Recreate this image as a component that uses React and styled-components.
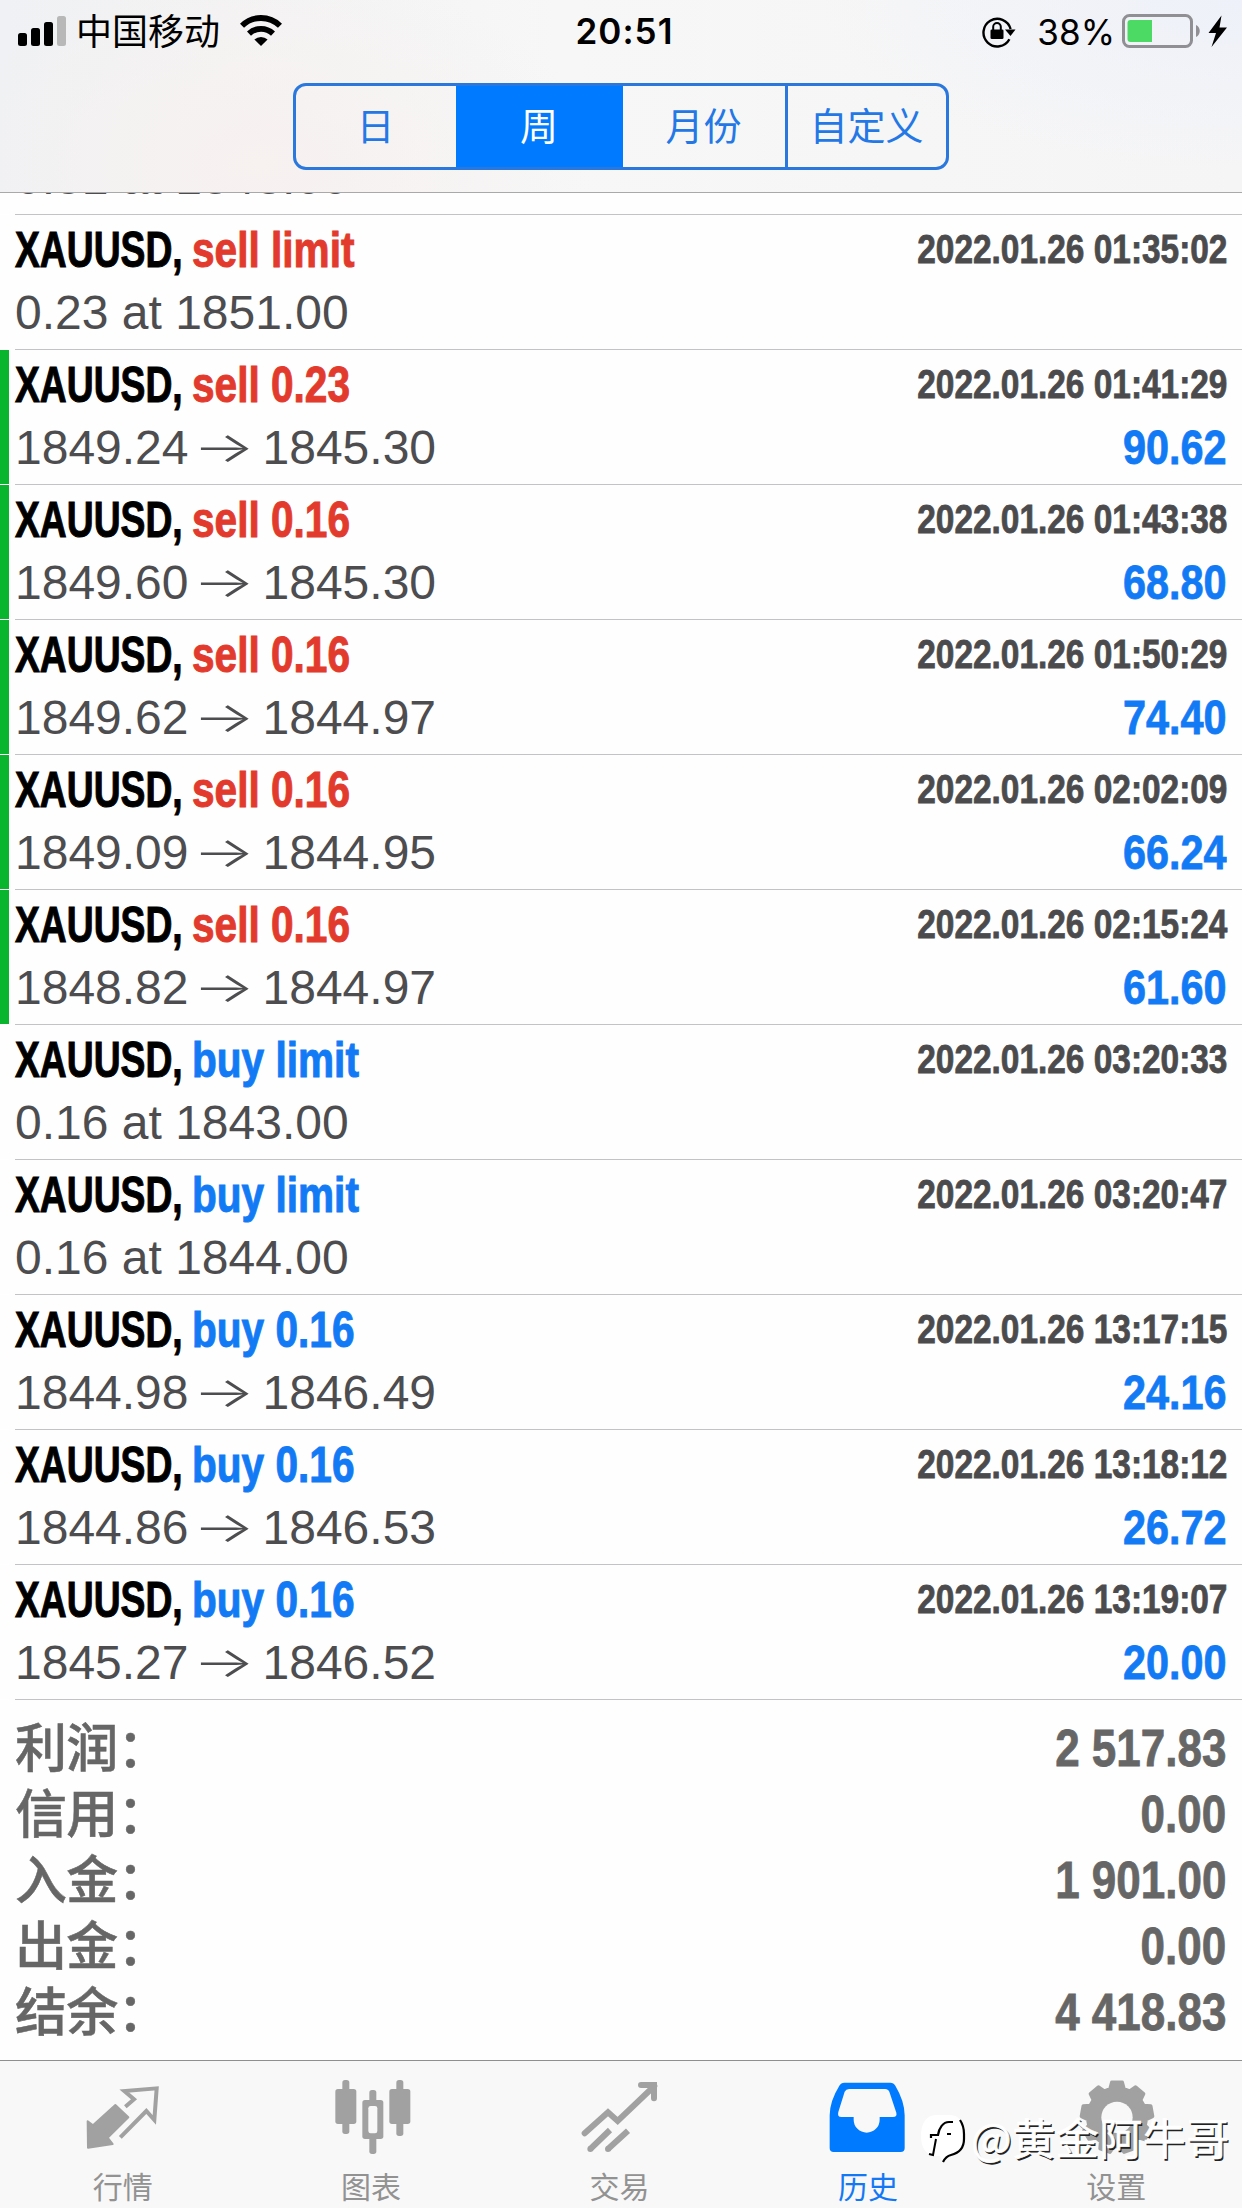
import React from 'react';
import styled, { createGlobalStyle } from 'styled-components';

const GlobalStyle = createGlobalStyle`
  * {
    box-sizing: border-box;
  }
  body {
    margin: 0;
    background: #fff;
    font-family: 'Liberation Sans', 'Noto Sans CJK SC', sans-serif;
  }
`;

const Screen = styled.div`
  display: flex;
  flex-direction: column;
  width: 1242px;
  height: 2208px;
  overflow: hidden;
  background: #fefefe;
`;

const Header = styled.header`
  flex: none;
  height: 193px;
  border-bottom: 1px solid #a9a9a9;
  background:
    radial-gradient(ellipse 420px 170px at 100% 0, #eef1f9 0%, rgba(238, 241, 249, 0) 100%),
    radial-gradient(ellipse 330px 200px at 21% 85%, #f7f1f0 0%, rgba(247, 241, 240, 0) 100%),
    linear-gradient(90deg, #eff1f4 0, #f3f3f3 18%, #f7f7f7 45%, #f5f5f6 100%);
`;

const StatusBar = styled.div`
  display: grid;
  grid-template-columns: 1fr auto 1fr;
  align-items: center;
  height: 60px;
  padding: 0 14px 0 18px;
`;

const StatusSide = styled.div`
  display: flex;
  align-items: center;
  justify-content: ${({ $end }) => ($end ? 'flex-end' : 'flex-start')};
`;

const Carrier = styled.span`
  margin: 0 20px 3px 9px;
  font: 36px/57px 'Noto Sans CJK SC', sans-serif;
`;

const Clock = styled.span`
  padding: 1px 0 1px 3px;
  font: 600 35px/60px Inter, sans-serif;
  letter-spacing: 1px;
`;

const Percent = styled.span`
  margin: 1px 7px 0 20px;
  font: 400 35px/60px Inter, sans-serif;
`;

const Segments = styled.nav`
  display: grid;
  grid-template-columns: 160px 167px 162px 1fr;
  width: 656px;
  height: 87px;
  margin: 23px 0 0 293px;
  border: 3px solid #2a77de;
  border-radius: 13px;
  overflow: hidden;
`;

const Segment = styled.button`
  border: 0;
  border-left: ${({ $divided }) => ($divided ? '3px solid #2a77de' : '0')};
  padding: 0 1px 6px 0;
  background: ${({ $active }) => ($active ? '#007aff' : 'transparent')};
  color: ${({ $active }) => ($active ? '#fff' : '#2478e6')};
  font: 38px/75px 'Noto Sans CJK SC', sans-serif;
`;

const List = styled.main`
  flex: none;
  display: flex;
  flex-direction: column;
  justify-content: flex-end;
  height: 1507px;
  overflow: hidden;
`;

const Row = styled.article`
  flex: none;
  display: flex;
  height: 135px;
`;

const Marker = styled.div`
  width: 9px;
  margin-right: 6px;
  background: ${({ $hit }) => ($hit ? '#08b52c' : 'transparent')};
  border-bottom: 1px solid #fff;
`;

const RowBody = styled.div`
  flex: 1;
  padding-right: 15px;
  border-bottom: 1px solid #c3c3c5;
`;

const Line = styled.div`
  display: flex;
  justify-content: space-between;
  height: ${({ $height }) => $height}px;
`;

const Title = styled.div`
  display: flex;
  font-size: 50px;
  font-weight: 700;
  line-height: 70px;
  white-space: nowrap;
  -webkit-text-stroke: 1px;
`;

const Symbol = styled.span`
  width: 177px;
  transform: scaleX(0.745);
  transform-origin: 0 0;
`;

const Side = styled.span`
  color: ${({ $buy }) => ($buy ? '#127af5' : '#e23a2c')};
  transform: scaleX(0.812);
  transform-origin: 0 0;
`;

const Time = styled.time`
  color: #4b4b4d;
  font-size: 40px;
  font-weight: 700;
  line-height: 68px;
  white-space: nowrap;
  -webkit-text-stroke: 0.8px;
  transform: scaleX(0.835);
  transform-origin: 100% 0;
`;

const Detail = styled.div`
  display: flex;
  color: #4d4d50;
  font-size: 48px;
  line-height: 60px;
  white-space: pre;
`;

const Arrow = styled.span`
  width: 74px;
  text-align: center;
  font-family: Inter, sans-serif;
  font-weight: 300;
  transform: translate(-2px, -1px) scale(1.36, 0.88);
`;

const Profit = styled.div`
  color: #127af5;
  font-size: 49px;
  font-weight: 700;
  line-height: 58px;
  -webkit-text-stroke: 0.8px;
  transform: scaleX(0.845);
  transform-origin: 100% 0;
`;

const Summary = styled.dl`
  flex: 1;
  margin: 0;
  padding: 15px 16px 0 15px;
`;

const SummaryRow = styled.div`
  display: flex;
  justify-content: space-between;
  height: 66px;
  color: #666;
`;

const Label = styled.dt`
  font: 500 52px/60px 'Noto Sans CJK SC', sans-serif;
  letter-spacing: -0.8px;
  -webkit-text-stroke: 0.5px;
`;

const Amount = styled.dd`
  margin: 0;
  font-size: 52px;
  font-weight: 700;
  line-height: 66px;
  -webkit-text-stroke: 0.8px;
  transform: scaleX(0.846);
  transform-origin: 100% 0;
`;

const TabBar = styled.nav`
  position: relative;
  flex: none;
  display: grid;
  grid-template-columns: repeat(5, 1fr);
  height: 148px;
  border-top: 1px solid #8f8f8f;
  background: #f8f8f8;
`;

const Tab = styled.a`
  display: flex;
  flex-direction: column;
  align-items: center;
  padding-top: 11px;
  color: ${({ $active }) => ($active ? '#1478f5' : '#929292')};
  font: 30px/44px 'Noto Sans CJK SC', sans-serif;

  svg {
    flex: none;
    margin-bottom: 11px;
    color: ${({ $active }) => ($active ? '#007aff' : '#a1a1a1')};
  }
`;

const TabLabel = styled.span`
  padding-right: 3px;
`;

// signature stamped over the right end of the tab bar
const Signature = styled.div`
  position: absolute;
  top: 53px;
  left: 920px;
  display: flex;
  align-items: center;
  gap: 1px;
  color: #fff;
  font: 43px/60px 'Noto Sans CJK SC', sans-serif;
  letter-spacing: 0.5px;
  text-shadow: 1.5px 1.5px 0 #222;
  -webkit-text-stroke: 0.6px #fff;
  white-space: nowrap;
`;

const SignatureName = styled.span`
  margin-top: -9px;
`;

const orders = [
  { side: 'sell limit', time: '2022.01.26 01:35:02', detail: '0.23 at 1851.00' },
  { side: 'sell 0.23', time: '2022.01.26 01:41:29', from: '1849.24', to: '1845.30', profit: '90.62', hit: true },
  { side: 'sell 0.16', time: '2022.01.26 01:43:38', from: '1849.60', to: '1845.30', profit: '68.80', hit: true },
  { side: 'sell 0.16', time: '2022.01.26 01:50:29', from: '1849.62', to: '1844.97', profit: '74.40', hit: true },
  { side: 'sell 0.16', time: '2022.01.26 02:02:09', from: '1849.09', to: '1844.95', profit: '66.24', hit: true },
  { side: 'sell 0.16', time: '2022.01.26 02:15:24', from: '1848.82', to: '1844.97', profit: '61.60', hit: true },
  { side: 'buy limit', time: '2022.01.26 03:20:33', detail: '0.16 at 1843.00' },
  { side: 'buy limit', time: '2022.01.26 03:20:47', detail: '0.16 at 1844.00' },
  { side: 'buy 0.16', time: '2022.01.26 13:17:15', from: '1844.98', to: '1846.49', profit: '24.16' },
  { side: 'buy 0.16', time: '2022.01.26 13:18:12', from: '1844.86', to: '1846.53', profit: '26.72' },
  { side: 'buy 0.16', time: '2022.01.26 13:19:07', from: '1845.27', to: '1846.52', profit: '20.00' },
];

const totals = [
  ['利润：', '2 517.83'],
  ['信用：', '0.00'],
  ['入金：', '1 901.00'],
  ['出金：', '0.00'],
  ['结余：', '4 418.83'],
];

function SignalIcon() {
  return (
    <svg width="49" height="32" viewBox="0 0 49 32">
      <rect x="0" y="18" width="9" height="13" rx="2.5" />
      <rect x="13" y="13" width="9" height="18" rx="2.5" />
      <rect x="26" y="7" width="9" height="24" rx="2.5" />
      <rect x="39" y="1" width="9" height="30" rx="2.5" fill="#b8b8b8" />
    </svg>
  );
}

function WifiIcon() {
  return (
    <svg width="42" height="32" viewBox="0 0 42 32">
      <g fill="none" stroke="#000" strokeWidth="5.8">
        <path d="M2 10.8a27 27 0 0 1 38 0" />
        <path d="M9 18.6a17.5 17.5 0 0 1 24 0" />
      </g>
      <path d="M14.4 24.6a9.8 9.8 0 0 1 13.2 0L21 31z" />
    </svg>
  );
}

function RotationLockIcon() {
  return (
    <svg width="36" height="34" viewBox="0 0 36 34">
      <path d="M28.4 25.2A13.8 13.8 0 1 1 29.6 15" fill="none" stroke="#000" strokeWidth="2.4" />
      <path d="M24 15.5h10.5L29.5 22z" />
      <rect x="9.5" y="15.5" width="13" height="9.5" rx="1.3" />
      <path d="M12.2 16v-3.2a3.8 3.8 0 0 1 7.6 0V16" fill="none" stroke="#000" strokeWidth="2" />
    </svg>
  );
}

function BatteryIcon() {
  return (
    <svg width="106" height="36" viewBox="0 0 106 36">
      <rect x="1.5" y="2.5" width="68" height="31" rx="6" fill="none" stroke="#8f8f94" strokeWidth="3" />
      <path d="M8.5 7H30v22H8.5A3 3 0 0 1 5.5 26V10a3 3 0 0 1 3-3z" fill="#4cd964" />
      <path d="M74 12c5 2 5 10 0 12z" fill="#8f8f94" />
      <path d="M99.5 2.5L86.5 20h7.5l-4.5 14L105 14.5h-7.5z" />
    </svg>
  );
}

function QuotesIcon() {
  return (
    <svg width="80" height="80" viewBox="0 0 240 240">
      <path
        d="M11 148L27 160L94 99L133 136L71 197L86 216L12 227Z"
        fill="currentColor"
        stroke="currentColor"
        strokeWidth="6"
        strokeLinejoin="round"
      />
      <path
        d="M124 104L150 82L121 57L218 49L211 144L187 117L109 196"
        fill="none"
        stroke="currentColor"
        strokeWidth="12"
      />
    </svg>
  );
}

function ChartIcon() {
  return (
    <svg width="80" height="80" viewBox="0 0 240 240" overflow="visible" fill="currentColor">
      <rect x="28" y="24" width="21" height="162" rx="8" />
      <rect x="7" y="51" width="63" height="105" rx="8" />
      <rect x="190" y="24" width="21" height="168" rx="8" />
      <rect x="169" y="51" width="63" height="105" rx="8" />
      <rect x="109" y="54" width="21" height="192" rx="8" />
      <rect x="88" y="84" width="63" height="117" rx="8" />
      <rect x="106" y="102" width="27" height="82" rx="7" fill="#f8f8f8" />
    </svg>
  );
}

function TradeIcon() {
  return (
    <svg width="80" height="80" viewBox="0 0 240 240" fill="none" stroke="currentColor" strokeWidth="18">
      <path d="M11 184L81 121L110 147L220 42" strokeLinecap="round" />
      <path d="M180 39H219V79" strokeLinecap="round" />
      <path d="M28 231L87 174M81 231L141 176" />
      <path d="M28 231h.1M81 231h.1" strokeLinecap="round" />
    </svg>
  );
}

function HistoryIcon() {
  return (
    <svg width="80" height="80" viewBox="0 0 240 240" fill="currentColor">
      <path
        fillRule="evenodd"
        d="M46 32H184Q194 32 199 41Q227 88 227 130V228Q227 240 215 240H14Q2 240 2 228V130Q2 88 31 41Q36 32 46 32Z
           M60 51Q51 51 47 59L28 120Q24 135 37 135H74V143A39 39 0 0 0 152 143V135H192Q205 135 202 122L182 62Q179 51 168 51Z"
      />
    </svg>
  );
}

const gearPoints = Array.from({ length: 9 }, (_, i) =>
  [
    [-14, 88],
    [-8.5, 107],
    [8.5, 107],
    [14, 88],
  ]
    .map(([offset, radius]) => {
      const angle = ((i * 40 + offset - 90) * Math.PI) / 180;
      return `${(117 + radius * Math.cos(angle)).toFixed(1)} ${(136 + radius * Math.sin(angle)).toFixed(1)}`;
    })
    .join('L'),
).join('L');

function SettingsIcon() {
  return (
    <svg width="80" height="80" viewBox="0 0 240 240" overflow="visible">
      <path
        d={`M${gearPoints}Z`}
        fill="currentColor"
        stroke="currentColor"
        strokeWidth="10"
        strokeLinejoin="round"
      />
      <circle cx="117" cy="136" r="47" fill="#f8f8f8" />
    </svg>
  );
}

function SignatureLogo() {
  return (
    <svg width="50" height="52" viewBox="0 0 50 52">
      <path
        d="M17 1h12c10 0 14 6 14 16v8c0 9-5 14-13 15l-7 8-3-6C7 43 1 35 1 22 1 8 7 1 17 1z"
        fill="#fff"
      />
      <path
        d="M40 6q4 6 4 14v5c0 9-5 14-13 16-4 1-6 3-8 7"
        fill="none"
        stroke="#000"
        strokeWidth="2.2"
      />
      <path d="M11 24v-3h7c1-7 5-13 11-13h4" fill="none" stroke="#000" strokeWidth="2.2" />
      <path d="M16 25l-3 16-4-1M27 20h4" fill="none" stroke="#000" strokeWidth="2" />
    </svg>
  );
}

const tabs = [
  { label: '行情', icon: QuotesIcon },
  { label: '图表', icon: ChartIcon },
  { label: '交易', icon: TradeIcon },
  { label: '历史', icon: HistoryIcon, active: true },
  { label: '设置', icon: SettingsIcon },
];

function Order({ order }) {
  return (
    <Row>
      <Marker $hit={order.hit} />
      <RowBody>
        <Line $height={68}>
          <Title>
            <Symbol>XAUUSD,</Symbol>
            <Side $buy={order.side.startsWith('buy')}>{order.side}</Side>
          </Title>
          <Time>{order.time}</Time>
        </Line>
        <Line $height={58}>
          {order.detail ? (
            <Detail>{order.detail}</Detail>
          ) : (
            <Detail>
              {order.from}
              <Arrow>→</Arrow>
              {order.to}
            </Detail>
          )}
          {order.profit && <Profit>{order.profit}</Profit>}
        </Line>
      </RowBody>
    </Row>
  );
}

function App() {
  return (
    <Screen>
      <GlobalStyle />
      <Header>
        <StatusBar>
          <StatusSide>
            <SignalIcon />
            <Carrier>中国移动</Carrier>
            <WifiIcon />
          </StatusSide>
          <Clock>20:51</Clock>
          <StatusSide $end>
            <RotationLockIcon />
            <Percent>38%</Percent>
            <BatteryIcon />
          </StatusSide>
        </StatusBar>
        <Segments>
          <Segment>日</Segment>
          <Segment $active>周</Segment>
          <Segment>月份</Segment>
          <Segment $divided>自定义</Segment>
        </Segments>
      </Header>
      <List>
        <Order order={{ side: 'sell limit', time: '', detail: '0.31 at 1848.00' }} />
        {orders.map((order) => (
          <Order key={order.time} order={order} />
        ))}
      </List>
      <Summary>
        {totals.map(([label, amount]) => (
          <SummaryRow key={label}>
            <Label>{label}</Label>
            <Amount>{amount}</Amount>
          </SummaryRow>
        ))}
      </Summary>
      <TabBar>
        {tabs.map(({ label, icon: Icon, active }) => (
          <Tab key={label} $active={active}>
            <Icon />
            <TabLabel>{label}</TabLabel>
          </Tab>
        ))}
        <Signature>
          <SignatureLogo />
          <SignatureName>@黄金阿牛哥</SignatureName>
        </Signature>
      </TabBar>
    </Screen>
  );
}

export default App;
